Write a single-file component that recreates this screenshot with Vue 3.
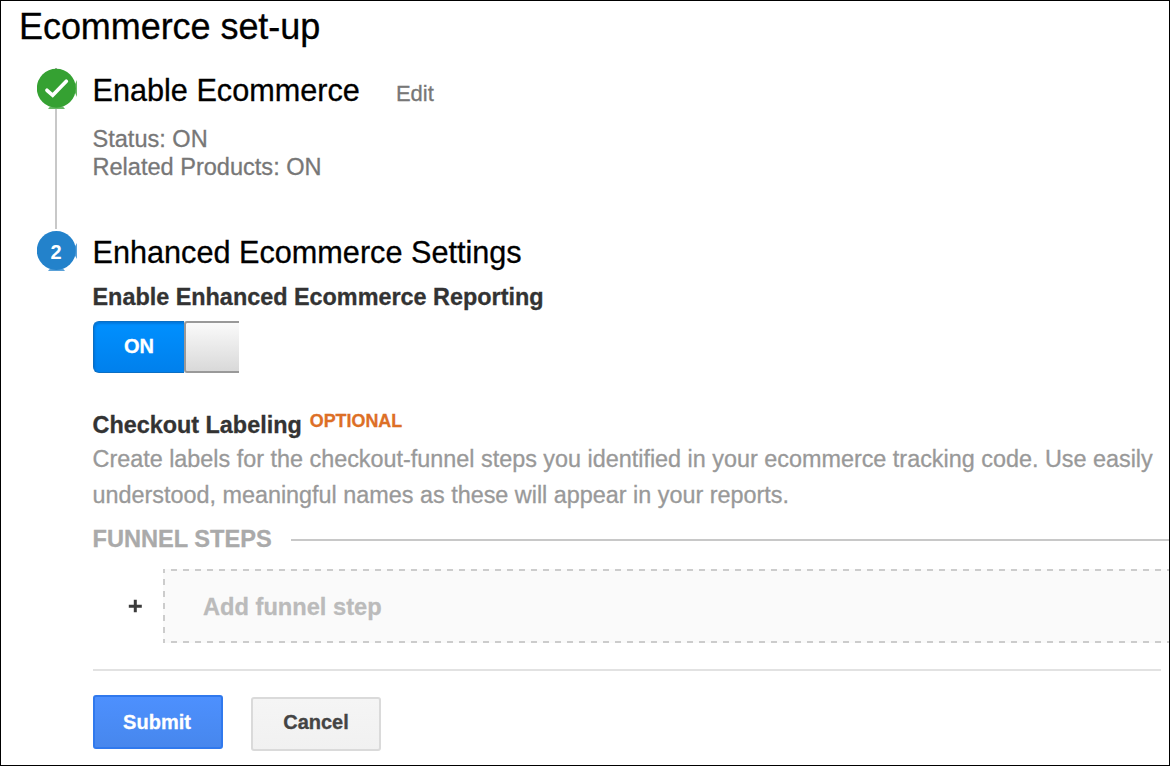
<script setup>
import { ref } from 'vue'

const enhanced = ref(true)
const summary = ['Status: ON', 'Related Products: ON']
</script>

<template>
  <main class="page">
    <h1 class="title">Ecommerce set-up</h1>

    <section class="step first">
      <div class="rail">
        <svg class="badge" width="41" height="41" viewBox="0 0 41 41">
          <path d="M18 0h2v2h-2z" fill="#aaa" />
          <path d="M37.500 17 40 12v17l-2.500-5z" fill="#35a132" opacity=".75" />
          <path d="M13 38.500h13l2 2.500H11z" fill="#35a132" opacity=".75" />
          <circle cx="19.300" cy="20.300" r="19.500" fill="#35a132" />
          <path d="M10 22.300 15.700 27.300 29.300 13.300" fill="none" stroke="#fff" stroke-width="3.700" stroke-linecap="round" />
        </svg>
        <span class="line"></span>
      </div>
      <div class="body">
        <div class="head">
          <h2>Enable Ecommerce</h2>
          <a class="edit">Edit</a>
        </div>
        <div class="summary">
          <div v-for="s in summary" :key="s">{{ s }}</div>
        </div>
      </div>
    </section>

    <section class="step">
      <div class="rail">
        <svg class="badge" width="41" height="41" viewBox="0 0 41 41">
          <path d="M37.500 16 40 12v16l-2.500-4z" fill="#2382cb" opacity=".75" />
          <path d="M13 37.500h13l2 2.500H11z" fill="#2382cb" opacity=".75" />
          <circle cx="19.300" cy="19.500" r="19.500" fill="#2382cb" />
          <text x="19" y="28" text-anchor="middle" class="num">2</text>
        </svg>
      </div>
      <div class="body">
        <h2 class="settings">Enhanced Ecommerce Settings</h2>
        <h3 class="reporting">Enable Enhanced Ecommerce Reporting</h3>
        <div class="switch" role="switch" :aria-checked="enhanced" @click="enhanced = !enhanced">
          <span class="on">ON</span>
          <span class="knob"></span>
        </div>

        <div class="labeling">
          <h3 class="checkout">Checkout Labeling</h3>
          <span class="optional">OPTIONAL</span>
        </div>
        <p class="hint">
          Create labels for the checkout-funnel steps you identified in your ecommerce tracking code. Use easily<br />
          understood, meaningful names as these will appear in your reports.
        </p>

        <div class="funnel"><span>FUNNEL STEPS</span><i class="rule"></i></div>
        <div class="add">
          <svg class="plus" width="14" height="14" viewBox="0 0 14 14">
            <path d="M7.300 .8v12.500M.8 7.200h13" stroke="#3c3c3c" stroke-width="3" />
          </svg>
          <div class="drop">Add funnel step</div>
        </div>
        <div class="divider"></div>
        <div class="actions">
          <button class="submit">Submit</button>
          <button class="cancel">Cancel</button>
        </div>
      </div>
    </section>
  </main>
</template>

<style>
body {
  margin: 0;
  background: #fff;
}
</style>

<style scoped>
.page {
  box-sizing: border-box;
  width: 1170px;
  height: 766px;
  overflow: hidden;
  border: 1px solid #000;
  background: #fff;
  font-family: "Liberation Sans", Arial, sans-serif;
  -webkit-text-stroke-width: .3px;
}
h1, h2, h3, p {
  margin: 0;
  font-weight: 400;
  white-space: nowrap;
}
.title {
  margin: 6px 0 0 18px;
  height: 61px;
  font-size: 36px;
  letter-spacing: -.06px;
  line-height: 40px;
}
.step {
  display: flex;
  gap: 15px;
  padding-left: 36px;
}
.first {
  height: 163px;
}
.rail {
  flex: none;
  width: 41px;
  display: flex;
  flex-direction: column;
}
.badge {
  flex: none;
  display: block;
}
.line {
  width: 2px;
  height: 120px;
  margin-left: 18px;
  background: #c8c8c8;
}
.num {
  font-size: 20px;
  font-weight: 700;
  fill: #fff;
}
.body {
  flex: 1;
  min-width: 0;
}
.head {
  display: flex;
  align-items: baseline;
  gap: 36px;
  padding-top: 2px;
}
h2 {
  font-size: 30.65px;
  line-height: 40px;
  text-indent: -.5px;
}
.edit {
  font-size: 22px;
  line-height: 30px;
  color: #777;
}
.summary {
  margin-top: 15px;
  font-size: 23.55px;
  line-height: 28px;
  text-indent: -.5px;
  color: #777;
}
.settings {
  padding-top: 1px;
}
h3 {
  font-size: 23.4px;
  line-height: 28px;
  font-weight: 700;
  text-indent: -.5px;
  color: #333;
}
.reporting {
  margin-top: 11px;
}
.switch {
  display: flex;
  width: 146px;
  height: 52px;
  margin-top: 10px;
}
.on {
  box-sizing: border-box;
  width: 91px;
  border: 1px solid #0a6fc4;
  border-right: 0;
  border-radius: 6px 0 0 6px;
  background: linear-gradient(#0090ff, #0080ec);
  box-shadow: inset 1px 2px 2px rgba(0, 70, 150, .3);
  color: #fff;
  font-size: 20px;
  font-weight: 700;
  line-height: 48px;
  text-align: center;
}
.knob {
  box-sizing: border-box;
  width: 55px;
  border: 2px solid #999;
  border-right: 0;
  border-radius: 3px 0 0 3px;
  background: linear-gradient(#fafafa, #d9d9d9);
}
.labeling {
  display: flex;
  gap: 8px;
  margin-top: 38px;
}
.optional {
  font-size: 17.9px;
  font-weight: 700;
  line-height: 20px;
  color: #dd6f26;
}
.hint {
  margin: 2px 0 0 -.5px;
  font-size: 23.39px;
  line-height: 36px;
  color: #999;
}
.funnel {
  display: flex;
  align-items: center;
  gap: 19px;
  margin-top: 12px;
  font-size: 23.6px;
  font-weight: 700;
  line-height: 28px;
  text-indent: -.5px;
  color: #aaa;
}
.rule {
  flex: 1;
  height: 2px;
  margin-top: 2px;
  background: #c8c8c8;
}
.add {
  display: flex;
  align-items: center;
  margin-top: 16px;
  padding-left: 35px;
}
.plus {
  flex: none;
  margin-right: 21px;
}
.drop {
  flex: 1;
  box-sizing: border-box;
  height: 74px;
  padding-left: 40px;
  background:
    repeating-linear-gradient(90deg, #ccc 0 2px, transparent 2px 8px, #ccc 8px 12px) 0 0 / 100% 2px no-repeat,
    repeating-linear-gradient(90deg, #ccc 0 2px, transparent 2px 8px, #ccc 8px 12px) 0 100% / 100% 2px no-repeat,
    repeating-linear-gradient(#ccc 0 4px, transparent 4px 10px, #ccc 10px 12px) 0 0 / 2px 100% no-repeat,
    #fafafa;
  font-size: 23.65px;
  font-weight: 700;
  line-height: 76px;
  color: #bbb;
}
.divider {
  height: 2px;
  width: 1068px;
  margin-top: 26px;
  background: #e2e2e2;
}
.actions {
  display: flex;
  gap: 28px;
  margin-top: 24px;
}
button {
  box-sizing: border-box;
  width: 130px;
  height: 54px;
  padding: 0 2px 0 0;
  border-radius: 3px;
  font: 700 20px/50px "Liberation Sans", Arial, sans-serif;
  -webkit-text-stroke-width: .3px;
}
.submit {
  border: 2px solid #3079ed;
  background: linear-gradient(#4d90fe, #4787ed);
  color: #fff;
}
.cancel {
  margin-top: 2px;
  padding: 0 0 4px;
  border: 2px solid #dadada;
  background: linear-gradient(#f5f5f5, #f1f1f1);
  color: #444;
  line-height: 46px;
}
</style>
